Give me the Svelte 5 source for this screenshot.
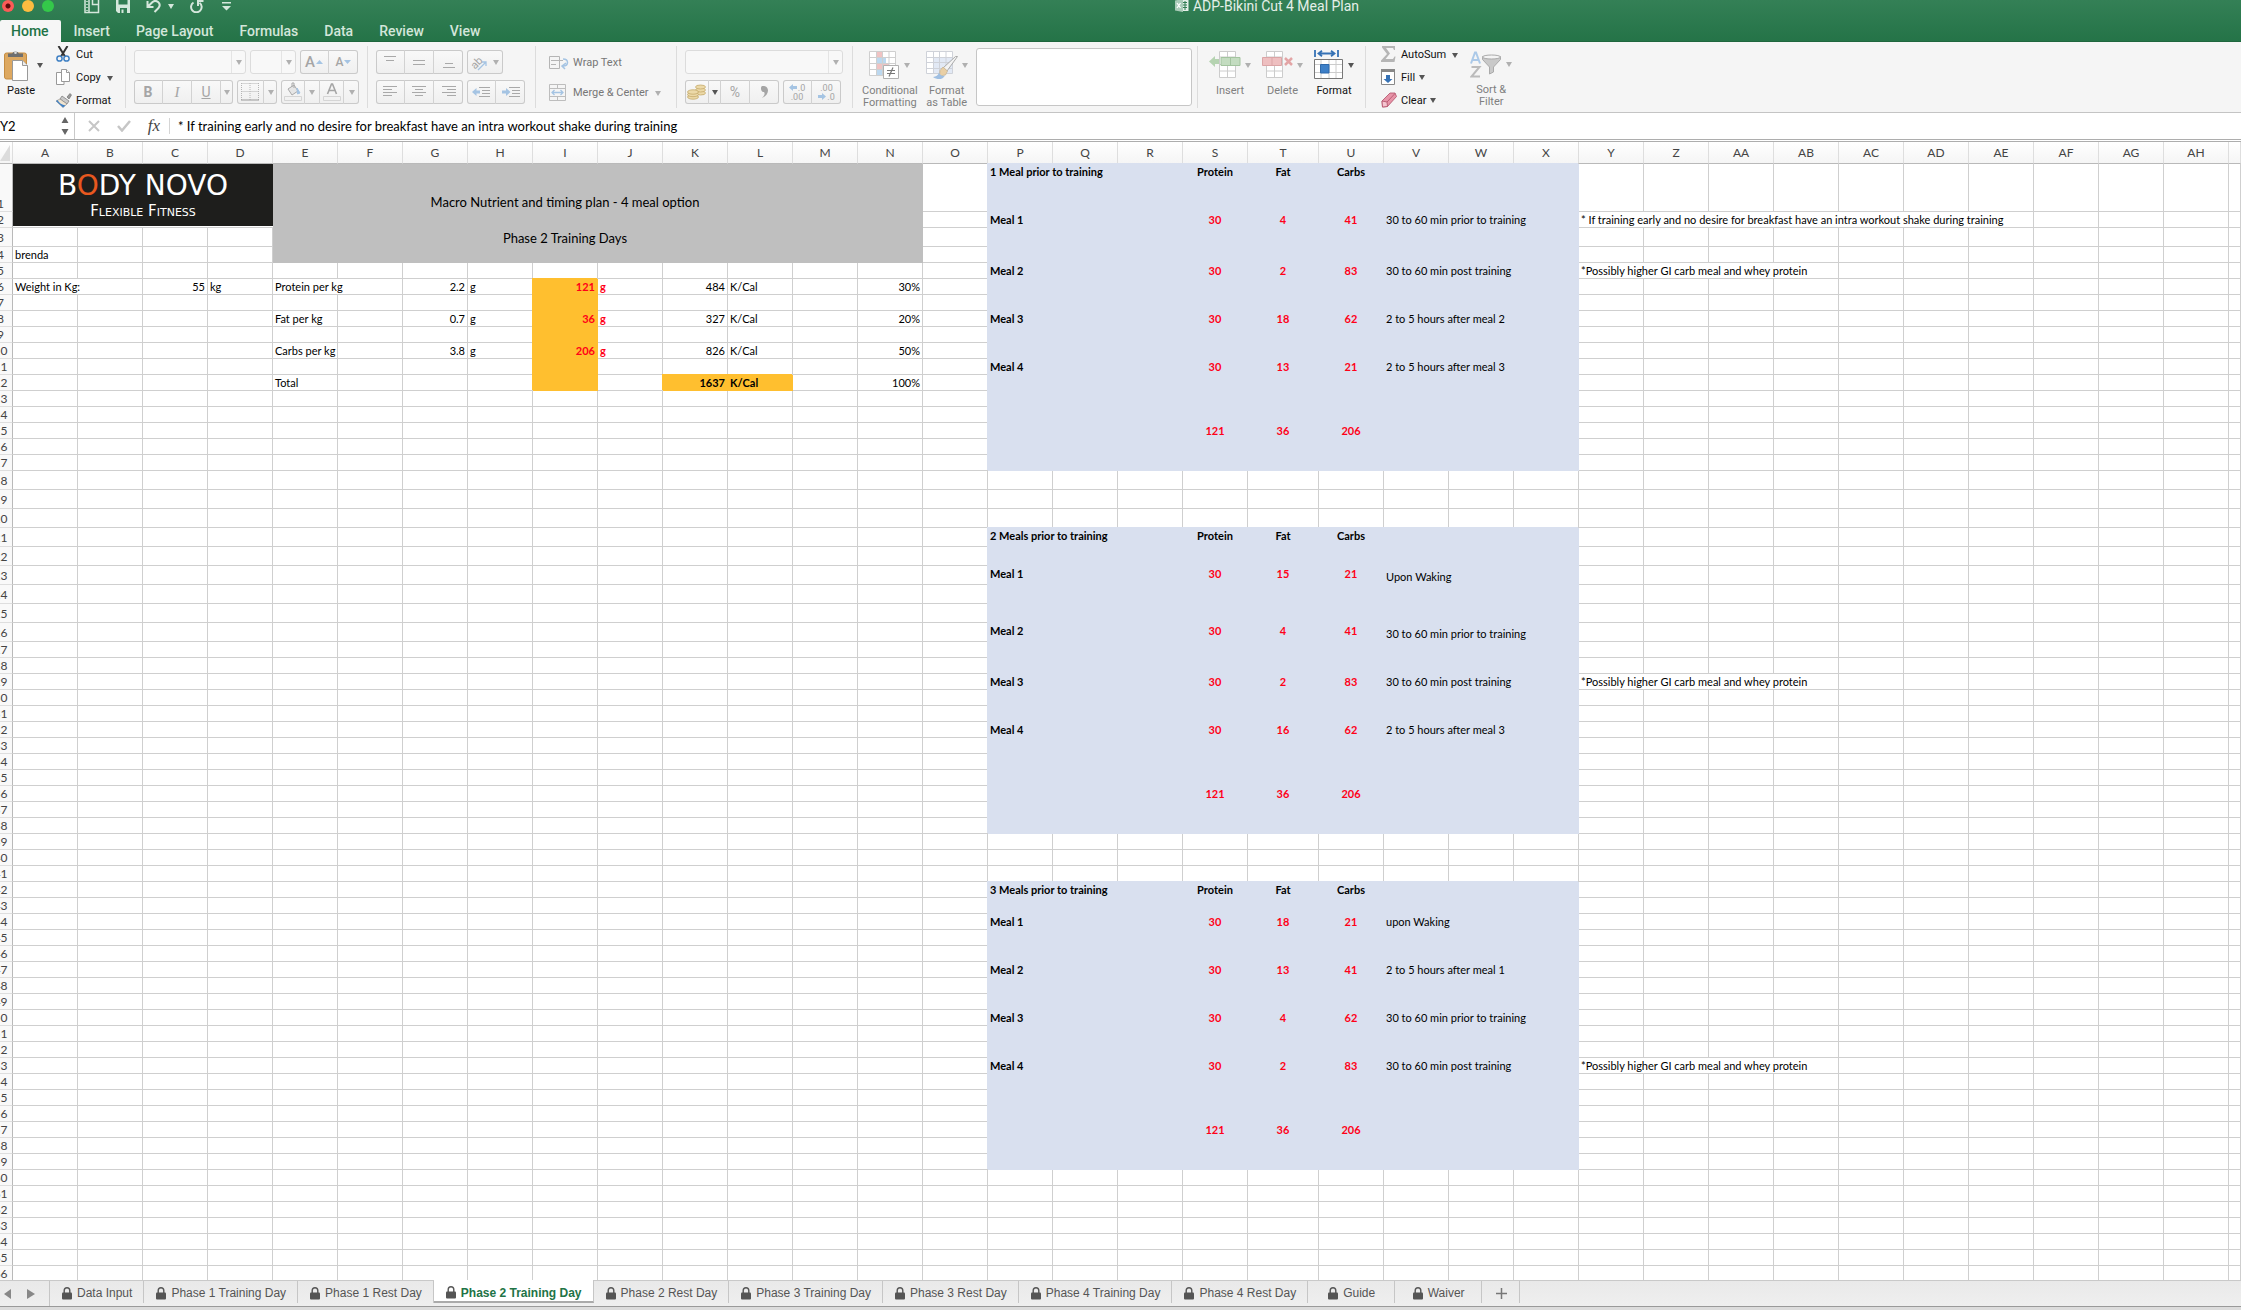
<script lang="ts">
	interface Cell {
		text: string;
		cls?: string;
		span?: number;
	}

	interface Meal {
		row: number;
		name: string;
		values: number[];
		note: string;
	}

	interface Block {
		first: number;
		last: number;
		title: string;
		totalRow: number;
		meals: Meal[];
	}

	const columnName = (i: number): string =>
		i < 26 ? String.fromCharCode(65 + i) : 'A' + String.fromCharCode(39 + i);

	const columns = Array.from({ length: 34 }, (_, i) => columnName(i));
	const rows = Array.from({ length: 66 }, (_, i) => i + 1);

	const menuTabs = ['Home', 'Insert', 'Page Layout', 'Formulas', 'Data', 'Review', 'View'];
	let activeMenu = $state('Home');

	const sheets = [
		'Data Input',
		'Phase 1 Training Day',
		'Phase 1 Rest Day',
		'Phase 2 Training Day',
		'Phase 2 Rest Day',
		'Phase 3 Training Day',
		'Phase 3 Rest Day',
		'Phase 4 Training Day',
		'Phase 4 Rest Day',
		'Guide',
		'Waiver'
	];
	let activeSheet = $state('Phase 2 Training Day');

	let cellRef = $state('Y2');
	let formula = $state(
		'* If training early and no desire for breakfast have an intra workout shake during training'
	);

	const blocks: Block[] = [
		{
			first: 1,
			last: 17,
			title: '1 Meal prior to training',
			totalRow: 15,
			meals: [
				{ row: 2, name: 'Meal 1', values: [30, 4, 41], note: '30 to 60 min prior to training' },
				{ row: 5, name: 'Meal 2', values: [30, 2, 83], note: '30 to 60 min post training' },
				{ row: 8, name: 'Meal 3', values: [30, 18, 62], note: '2 to 5 hours after meal 2' },
				{ row: 11, name: 'Meal 4', values: [30, 13, 21], note: '2 to 5 hours after meal 3' }
			]
		},
		{
			first: 21,
			last: 38,
			title: '2 Meals prior to training',
			totalRow: 36,
			meals: [
				{ row: 23, name: 'Meal 1', values: [30, 15, 21], note: 'Upon Waking' },
				{ row: 26, name: 'Meal 2', values: [30, 4, 41], note: '30 to 60 min prior to training' },
				{ row: 29, name: 'Meal 3', values: [30, 2, 83], note: '30 to 60 min post training' },
				{ row: 32, name: 'Meal 4', values: [30, 16, 62], note: '2 to 5 hours after meal 3' }
			]
		},
		{
			first: 42,
			last: 59,
			title: '3 Meals prior to training',
			totalRow: 57,
			meals: [
				{ row: 44, name: 'Meal 1', values: [30, 18, 21], note: 'upon Waking' },
				{ row: 47, name: 'Meal 2', values: [30, 13, 41], note: '2 to 5 hours after meal 1' },
				{ row: 50, name: 'Meal 3', values: [30, 4, 62], note: '30 to 60 min prior to training' },
				{ row: 53, name: 'Meal 4', values: [30, 2, 83], note: '30 to 60 min post training' }
			]
		}
	];

	const totals = [121, 36, 206];

	const cells: Record<string, Cell> = {
		E1: { text: 'Macro Nutrient and timing plan - 4 meal option', cls: 'banner', span: 9 },
		E3: { text: 'Phase 2 Training Days', cls: 'banner', span: 9 },
		A4: { text: 'brenda' },
		A6: { text: 'Weight in Kg:', span: 2 },
		C6: { text: '55', cls: 'num' },
		D6: { text: 'kg' },
		E6: { text: 'Protein per kg', span: 2 },
		E8: { text: 'Fat per kg' },
		E10: { text: 'Carbs per kg' },
		E12: { text: 'Total' },
		Y2: { text: '* If training early and no desire for breakfast have an intra workout shake during training', span: 7 },
		Y5: { text: '*Possibly higher GI carb meal and whey protein', span: 4 },
		Y29: { text: '*Possibly higher GI carb meal and whey protein', span: 4 },
		Y53: { text: '*Possibly higher GI carb meal and whey protein', span: 4 }
	};

	const macros = [
		{ row: 6, perKg: '2.2', grams: '121', kcal: '484', share: '30%' },
		{ row: 8, perKg: '0.7', grams: '36', kcal: '327', share: '20%' },
		{ row: 10, perKg: '3.8', grams: '206', kcal: '826', share: '50%' }
	];

	for (let r = 1; r <= 4; r++) {
		cells['E' + r] ??= { text: '', cls: 'banner', span: 9 };
		cells['N' + r] = { text: '', cls: 'banner' };
	}

	for (let r = 6; r <= 12; r++) cells['I' + r] = { text: '', cls: 'amber' };

	for (const m of macros) {
		cells['G' + m.row] = { text: m.perKg, cls: 'num' };
		cells['H' + m.row] = { text: 'g' };
		cells['I' + m.row] = { text: m.grams, cls: 'num amber red' };
		cells['J' + m.row] = { text: 'g', cls: 'red' };
		cells['K' + m.row] = { text: m.kcal, cls: 'num' };
		cells['L' + m.row] = { text: 'K/Cal' };
		cells['N' + m.row] = { text: m.share, cls: 'num' };
	}
	cells.K12 = { text: '1637', cls: 'num amber bold' };
	cells.L12 = { text: 'K/Cal', cls: 'amber bold' };
	cells.N12 = { text: '100%', cls: 'num' };

	for (const b of blocks) {
		for (let r = b.first; r <= b.last; r++) {
			cells['P' + r] = { text: '', cls: 'blue', span: 3 };
			for (const c of 'STU') cells[c + r] = { text: '', cls: 'blue' };
			cells['V' + r] = { text: '', cls: 'blue', span: 3 };
		}
		cells['P' + b.first] = { text: b.title, cls: 'blue bold', span: 3 };
		['Protein', 'Fat', 'Carbs'].forEach((t, i) => {
			cells['STU'[i] + b.first] = { text: t, cls: 'blue bold mid' };
		});
		for (const m of b.meals) {
			cells['P' + m.row] = { text: m.name, cls: 'blue bold', span: 3 };
			m.values.forEach((v, i) => {
				cells['STU'[i] + m.row] = { text: String(v), cls: 'blue red mid' };
			});
			cells['V' + m.row] = { text: m.note, cls: 'blue note', span: 3 };
		}
		totals.forEach((v, i) => {
			cells['STU'[i] + b.totalRow] = { text: String(v), cls: 'blue red mid' };
		});
	}

	const rowCells = (row: number): Cell[] => {
		const out: Cell[] = [];
		// A1:D2 is taken up by the logo
		let i = row <= 2 ? 4 : 0;
		while (i < columns.length) {
			const cell = cells[columns[i] + row] ?? { text: '' };
			out.push(cell);
			i += cell.span ?? 1;
		}
		return out;
	};

	const rowClass = (row: number): string => {
		if (row === 1) return 'tall';
		if (row === 3 || (row >= 18 && row <= 26)) return 'medium';
		return '';
	};
</script>

{#snippet caret(dark = false)}
	<i class="caret" class:dark></i>
{/snippet}

{#snippet lines(widths: number[], top = 4, gap = 4, center = false)}
	<svg width="16" height="18" viewBox="0 0 16 18" stroke="#a9a9a9" fill="none">
		{#each widths as w, i}
			<path d="M{center ? 8 - w / 2 : 1} {top + i * gap + 0.5}h{w}" />
		{/each}
	</svg>
{/snippet}

{#snippet lock()}
	<svg width="10" height="13" viewBox="0 0 10 13">
		<path d="M2.2 6V3.6a2.8 2.8 0 0 1 5.6 0V6" fill="none" stroke="#555" stroke-width="1.4" />
		<rect y="5.5" width="10" height="7" rx="1" fill="#555" />
	</svg>
{/snippet}

<div class="window">
	<header>
		<div class="titlebar">
			<div class="quick">
				<div class="lights">
					<button class="light close" aria-label="Close"></button>
					<button class="light minimize" aria-label="Minimize"></button>
					<button class="light zoom" aria-label="Zoom"></button>
				</div>
				<button aria-label="New from template">
					<svg width="16" height="16" viewBox="0 0 16 16" fill="none" stroke="#d5e7dc" stroke-width="1.5">
						<path d="M1 1h13.500v13.500H1zM5 1v13.500M8.500 1v5.500h6" />
						<path d="M3 3v10" stroke-dasharray="1 2" />
					</svg>
				</button>
				<button aria-label="Save">
					<svg width="14" height="14" viewBox="0 0 14 14">
						<path d="M0 0h14v14H2l-2-2z" fill="#d5e7dc" />
						<path d="M2.500 0h9v5.500h-9zM4 9h7v5H4z" fill="#317c53" />
						<path d="M5.500 10.500h2V14h-2z" fill="#d5e7dc" />
					</svg>
				</button>
				<button class="undo" aria-label="Undo">
					<svg width="16" height="14" viewBox="0 0 16 14" fill="none" stroke="#d5e7dc" stroke-width="2">
						<path d="M1.500 2v6h6M2 7.500 6 3.500c4-4 10 1 6.500 5.500L8.500 13" />
					</svg>
					<i class="caret pale"></i>
				</button>
				<button aria-label="Redo">
					<svg width="14" height="14" viewBox="0 0 14 14" fill="none" stroke="#d5e7dc" stroke-width="2">
						<path d="M3.500 3.500a5.300 5.300 0 1 0 6 .2M8 7V2h5.500" />
					</svg>
				</button>
				<button class="customize" aria-label="Customize toolbar">
					<svg width="9" height="9" viewBox="0 0 9 9" fill="#d5e7dc">
						<path d="M0 0h9v1.500H0zM0 4h9L4.500 8.500z" />
					</svg>
				</button>
			</div>
			<h1>
				<svg width="14" height="14" viewBox="0 0 14 14">
					<path d="M5 1h8.500v11H5z" fill="#e4efe8" />
					<path d="M7 3.500h5M7 6h5M7 8.500h5M10 2v9" stroke="#317c53" />
					<path d="M0 1.500 8 0v13l-8-1.500z" fill="#a9cbb8" />
					<path d="m2 4 3.500 5M5.500 4 2 9" stroke="#fff" stroke-width="1.300" />
				</svg>
				ADP-Bikini Cut 4 Meal Plan
			</h1>
		</div>
		<nav class="menu">
			{#each menuTabs as tab}
				<button class:active={tab === activeMenu} onclick={() => (activeMenu = tab)}>{tab}</button>
			{/each}
		</nav>
	</header>

	<div class="ribbon">
		<section class="group clipboard">
			<button class="big paste">
				<span class="pic">
					<svg width="26" height="32" viewBox="0 0 26 32">
						<rect x="0.500" y="4" width="22" height="26" rx="2" fill="#dda860" stroke="#c58d42" />
						<path d="M4 8V4.500h4a4 4 0 0 1 7 0h4V8z" fill="#6f6f6f" />
						<circle cx="11.500" cy="3.800" r="1.300" fill="#ddd" />
						<path d="M8.500 11.500h10l5 5v15h-15z" fill="#fff" stroke="#999" />
						<path d="M18.500 11.500v5h5" fill="#eee" stroke="#999" />
					</svg>
					{@render caret(true)}
				</span>
				<span>Paste</span>
			</button>
			<div class="stack">
				<button>
					<svg width="16" height="16" viewBox="0 0 16 16" fill="none">
						<path d="M2.500 0 9 10.500M11.500 0 5 10.500" stroke="#333" stroke-width="2" />
						<circle cx="3.500" cy="12.500" r="2.600" stroke="#3f80c4" stroke-width="1.500" />
						<circle cx="10.500" cy="12.500" r="2.600" stroke="#3f80c4" stroke-width="1.500" />
					</svg>
					Cut
				</button>
				<button>
					<svg width="16" height="16" viewBox="0 0 16 16" fill="#fff" stroke="#999">
						<path d="M.500 3.500h5l2.500 2.500v9.500H.500z" />
						<path d="M5.500.500h5l3 3v9h-8z" />
						<path d="M10.500.500v3h3" />
					</svg>
					Copy <span class="gap-caret">{@render caret(true)}</span>
				</button>
				<button>
					<svg width="16" height="15" viewBox="0 0 16 15">
						<path d="m11 4 3-3.500 1.500 1.500L13 6z" fill="#999" stroke="#666" stroke-width=".6" />
						<path d="m6 3 7 5-2 3-7-5z" fill="#c9c9c9" stroke="#777" stroke-width=".7" />
						<path d="m4 6 7 5-4 3.500-7-6.500z" fill="#efe3cf" stroke="#777" stroke-width=".5" />
						<path d="m0 8 7 6.500 2.500-2C6 12 3 10 1.500 7z" fill="#3f80c4" />
					</svg>
					Format
				</button>
			</div>
		</section>

		<section class="group rows fonts">
			<div class="line">
				<span class="combo font"><select aria-label="Font"><option></option></select>{@render caret()}</span>
				<span class="combo size"><select aria-label="Font size"><option></option></select>{@render caret()}</span>
				<div class="seg">
					<button aria-label="Increase font size">
						<span class="letter large">A</span>
						<svg width="7" height="6" viewBox="0 0 7 6"><path d="M3.500 1 7 5H0z" fill="#a5c4e3" /></svg>
					</button>
					<button aria-label="Decrease font size">
						<span class="letter">A</span>
						<svg width="7" height="6" viewBox="0 0 7 6"><path d="M3.500 5 7 1H0z" fill="#a5c4e3" /></svg>
					</button>
				</div>
			</div>
			<div class="line">
				<div class="seg">
					<button aria-label="Bold"><b>B</b></button>
					<button aria-label="Italic"><em>I</em></button>
					<button aria-label="Underline"><u>U</u></button>
					<button class="drop" aria-label="Underline style">{@render caret()}</button>
				</div>
				<div class="seg">
					<button class="narrow" aria-label="Borders">
						<svg width="18" height="18" viewBox="0 0 18 18" stroke="#b5b5b5" fill="none">
							<path d="M.500.500h17M.500 8.500h17M.500 0v17M9 0v17M17.500 0v17" stroke-dasharray="1 1" />
							<path d="M0 17h18" stroke="#999" />
						</svg>
					</button>
					<button class="drop narrow-drop" aria-label="Border style">{@render caret()}</button>
				</div>
				<div class="seg">
					<button class="plain" aria-label="Fill color">
						<svg width="18" height="20" viewBox="0 0 18 20" fill="none" stroke="#a9a9a9">
							<path d="m4 7 6-4 4 6-6 4z" fill="#e6e6e6" />
							<path d="M8 5V1h2v5" />
							<path d="m13 6 3 5-2.500 1z" fill="#a5c4e3" stroke="#a5c4e3" />
							<path d="M.500 14.500h17v4H.500z" stroke="#d5d5d5" />
						</svg>
					</button>
					<button class="drop half" aria-label="Fill options">{@render caret()}</button>
					<button class="plain" aria-label="Font color">
						<svg width="18" height="20" viewBox="0 0 18 20" fill="none">
							<path d="M4.500 12 8.500 2h1l4 10M6 8.500h6" stroke="#a5a5a5" stroke-width="1.600" />
							<path d="M.500 14.500h17v4H.500z" stroke="#d5d5d5" />
						</svg>
					</button>
					<button class="drop half" aria-label="Font color options">{@render caret()}</button>
				</div>
			</div>
		</section>

		<section class="group rows align">
			<div class="line">
				<div class="seg">
					<button aria-label="Align top">{@render lines([12, 8], 3, 4, true)}</button>
					<button aria-label="Align middle">{@render lines([12, 12], 7, 4, true)}</button>
					<button aria-label="Align bottom">{@render lines([8, 12], 10, 4, true)}</button>
				</div>
				<div class="seg">
					<button class="orient" aria-label="Orientation">
						<svg width="18" height="18" viewBox="0 0 18 18">
							<text x="-1" y="13" transform="rotate(-45 6 9)" font-size="11" fill="#a5a5a5">ab</text>
							<path d="m7 17 8-8m0 4V9h-4" fill="none" stroke="#a5c4e3" stroke-width="1.300" />
						</svg>
						{@render caret()}
					</button>
				</div>
			</div>
			<div class="line">
				<div class="seg">
					<button aria-label="Align left">{@render lines([14, 9, 14, 9], 3, 3)}</button>
					<button aria-label="Align center">{@render lines([14, 8, 14, 8], 3, 3, true)}</button>
					<button aria-label="Align right">
						<svg width="16" height="18" viewBox="0 0 16 18" stroke="#a9a9a9">
							<path d="M1 3.500h14M6 6.500h9M1 9.500h14M6 12.500h9" />
						</svg>
					</button>
				</div>
				<div class="seg">
					<button aria-label="Decrease indent">
						<svg width="18" height="14" viewBox="0 0 18 14">
							<path d="M7 2.500h11M10 5.500h8M10 8.500h8M7 11.500h11" stroke="#a9a9a9" />
							<path d="m0 7 4.500-4v2.500H8v3H4.500V11z" fill="#a5c4e3" />
						</svg>
					</button>
					<button aria-label="Increase indent">
						<svg width="18" height="14" viewBox="0 0 18 14">
							<path d="M7 2.500h11M10 5.500h8M10 8.500h8M7 11.500h11" stroke="#a9a9a9" />
							<path d="M8.500 7 4 3v2.500H0v3h4V11z" fill="#a5c4e3" />
						</svg>
					</button>
				</div>
			</div>
		</section>

		<section class="group rows wrap">
			<button class="line">
				<svg width="20" height="15" viewBox="0 0 20 15" fill="none" stroke="#b5b5b5">
					<path d="M.500 1.500h10v12H.500zM2 5.500h12M2 9.500h5" />
					<path d="M14 4c6 0 6 7 0 7m3-3-4 3 3 3" stroke="#a5c4e3" stroke-width="1.500" />
				</svg>
				Wrap Text
			</button>
			<button class="line">
				<svg width="20" height="17" viewBox="0 0 20 17" fill="none" stroke="#bdbdbd">
					<path d="M.500.500h16v16H.500zM.500 4.500h16M.500 12.500h16M8.500.500v4M8.500 12.500v4" />
					<path d="M3 8.500h11M5.500 6 3 8.500 5.500 11M11.500 6 14 8.500 11.500 11" stroke="#a5c4e3" stroke-width="1.300" />
				</svg>
				Merge &amp; Center <span class="gap-caret">{@render caret()}</span>
			</button>
		</section>

		<section class="group rows numbers">
			<div class="line">
				<span class="combo number"><select aria-label="Number format"><option></option></select>{@render caret()}</span>
			</div>
			<div class="line">
				<div class="seg">
					<button class="plain" aria-label="Currency">
						<svg width="20" height="16" viewBox="0 0 20 16" fill="#ecd9a8" stroke="#c4a96b" stroke-width=".8">
							<ellipse cx="13.500" cy="9" rx="5" ry="2" />
							<ellipse cx="13.500" cy="6" rx="5" ry="2" />
							<ellipse cx="13.500" cy="3" rx="5" ry="2" />
							<ellipse cx="6" cy="13" rx="5.500" ry="2.200" />
							<ellipse cx="6" cy="10.500" rx="5.500" ry="2.200" />
							<ellipse cx="6" cy="8" rx="5.500" ry="2.200" />
						</svg>
					</button>
					<button class="drop" aria-label="Currency options">{@render caret(true)}</button>
					<button aria-label="Percent">%</button>
					<button aria-label="Comma style">
						<svg width="8" height="12" viewBox="0 0 8 12"><path d="M1 0c8-1 8 9 0 12 3-3 3-5 2-6C0 7-1 1 1 0z" fill="#a5a5a5" /></svg>
					</button>
				</div>
				<div class="seg">
					<button class="decimals" aria-label="Increase decimal">
						<span><svg width="8" height="7" viewBox="0 0 8 7"><path d="m0 3.500 4-3.500v2h4v3H4v2z" fill="#a5c4e3" /></svg>.0</span>
						<span>.00</span>
					</button>
					<button class="decimals" aria-label="Decrease decimal">
						<span>.00</span>
						<span><svg width="8" height="7" viewBox="0 0 8 7"><path d="M8 3.500 4 0v2H0v3h4v2z" fill="#a5c4e3" /></svg>.0</span>
					</button>
				</div>
			</div>
		</section>

		<section class="group styles">
			<button class="big faded">
				<span class="pic">
					<svg width="31" height="30" viewBox="0 0 31 30">
						<path d="M.500 1.500h26v24H.500z" fill="#fff" />
						<path d="M7 1.500h6v6H7zM7 13.500h13v6H7z" fill="#f0c3c3" />
						<path d="M7 7.500h10v6H7zM7 19.500h6v6H7z" fill="#bcd8ef" />
						<path d="M.500 1.500h26v24H.500zM.500 7.500h26M.500 13.500h26M.500 19.500h26M7.500 1.500v24M13.500 1.500v24M20 1.500v24" fill="none" stroke="#cfcfcf" />
						<path d="M14.500 15.500h15v13h-15z" fill="#fff" stroke="#b0b0b0" />
						<path d="M18 20.500h8M18 23.500h8M24 17.500l-4 9" stroke="#777" stroke-width="1.200" />
					</svg>
					{@render caret()}
				</span>
				<span>Conditional</span>
				<span>Formatting</span>
			</button>
			<button class="big faded">
				<span class="pic">
					<svg width="32" height="30" viewBox="0 0 32 30">
						<path d="M.500 1.500h26v22H.500z" fill="#fff" />
						<path d="M7 7.500h20v16H7z" fill="#e2e9f5" />
						<path d="M.500 1.500h26v22H.500zM.500 7.500h26M.500 12.500h26M.500 18.500h26M7.500 1.500v22M13.500 1.500v22M20 1.500v22" fill="none" stroke="#cfd2d9" />
						<path d="M31.500 6.500 21 21l-4-3L29.500 6.500z" fill="#f3f3f3" stroke="#aaa" />
						<path d="m17 17 4.500 4-2 4-6 1 .500-5.500z" fill="#e9cfa5" stroke="#c4b28f" stroke-width=".7" />
						<path d="M13 22.500c-1 3-3 4-6 4.500 4 3 10 3 12-1.500-2 1-5 0-6-3z" fill="#9fbfe2" />
					</svg>
					{@render caret()}
				</span>
				<span>Format</span>
				<span>as Table</span>
			</button>
			<div class="gallery"></div>
		</section>

		<section class="group cells">
			<button class="big faded">
				<span class="pic">
					<svg width="32" height="28" viewBox="0 0 32 28">
						<path d="M10.500.500h16v26h-16zM10.500 6h16M10.500 13.500h16M10.500 20h16M18.500.500v26" fill="#fff" stroke="#ccc" />
						<path d="M12 6.500h19v8H12z" fill="#c3dcc0" stroke="#a3c49f" />
						<path d="M21.500 6.500v8" stroke="#a3c49f" />
						<path d="m0 10.500 6-5.500v3h4v5H6v3z" fill="#b5d3b1" />
					</svg>
					{@render caret()}
				</span>
				<span>Insert</span>
			</button>
			<button class="big faded">
				<span class="pic">
					<svg width="31" height="28" viewBox="0 0 31 28">
						<path d="M4.500.500h16v26h-16zM4.500 6h16M4.500 13.500h16M4.500 20h16M12.500.500v26" fill="#fff" stroke="#ccc" />
						<path d="M.500 6.500h19v8H.500z" fill="#eebfc0" stroke="#dba5a6" />
						<path d="M10 6.500v8" stroke="#dba5a6" />
						<path d="m23 7 7 7m0-7-7 7" stroke="#e3a5a6" stroke-width="2.500" />
					</svg>
					{@render caret()}
				</span>
				<span>Delete</span>
			</button>
			<button class="big">
				<span class="pic">
					<svg width="30" height="30" viewBox="0 0 30 30">
						<path d="M.500 9.500h28v19H.500z" fill="#fff" />
						<path d="M1 14.500h27M1 22.500h27M7 10v18M15 10v18M22 10v18" stroke="#ccc" />
						<path d="M.500 9.500h28v19H.500z" fill="none" stroke="#777" />
						<path d="M6.500 14.500h8.500v8.500H6.500z" fill="#3d7fc7" stroke="#2f69aa" />
						<path d="M1 0v7M24 0v7M5 3.500h15M8 .800 4.500 3.500 8 6.200M17 .800l3.500 2.700L17 6.200" fill="none" stroke="#3672b5" stroke-width="1.800" />
					</svg>
					{@render caret(true)}
				</span>
				<span>Format</span>
			</button>
		</section>

		<section class="group editing">
			<div class="stack">
				<button>
					<svg width="16" height="16" viewBox="0 0 16 16"><path d="M1 0h13v4h-1l-1-2H5l4 5.500L4.500 13H12l1.500-2.500h1L13.500 16H0v-1.500L6 8 1 1.500z" fill="#b5b5b5" /></svg>
					AutoSum <span class="gap-caret">{@render caret(true)}</span>
				</button>
				<button>
					<svg width="16" height="16" viewBox="0 0 16 16">
						<path d="M.500.500h13v15H.500z" fill="#fff" stroke="#888" />
						<path d="M0 0h14v3H0z" fill="#888" />
						<path d="M5 6h4v4h2.500L7 14 2.500 10H5z" fill="#3672b5" />
					</svg>
					Fill {@render caret(true)}
				</button>
				<button>
					<svg width="16" height="16" viewBox="0 0 16 16" stroke="#b04f67" stroke-width=".8">
						<path d="m1 9 8-8h5l1.500 3.500-9 10-5 .500z" fill="#e794a8" />
						<path d="m1 9 5 1 .500 4.500-5 .500z" fill="#f5c5d0" />
						<path d="M6 10 14 1.500" fill="none" />
					</svg>
					Clear {@render caret(true)}
				</button>
			</div>
			<button class="big faded sort">
				<span class="pic">
					<svg width="32" height="28" viewBox="0 0 32 28" fill="none">
						<path d="m1 12.500 4-11h1l4 11M2.500 9h6" stroke="#abc9e8" stroke-width="2" />
						<path d="M1.500 16h8l-8 9.500h8.500" stroke="#bbb" stroke-width="2" />
						<path d="M12.500 5.500v3l7 7.500v7l4-2V16l7-7.500v-3z" fill="#c9c9c9" stroke="#aaa" />
						<ellipse cx="21.500" cy="6" rx="9" ry="2" fill="#f4f4f4" stroke="#aaa" />
					</svg>
					{@render caret()}
				</span>
				<span>Sort &amp;</span>
				<span>Filter</span>
			</button>
		</section>
	</div>

	<div class="formula-bar">
		<div class="name-box">
			<input aria-label="Name box" bind:value={cellRef} />
			<svg width="8" height="18" viewBox="0 0 8 18" fill="#666"><path d="M4 0 7.500 6h-7zM4 18 .500 12h7z" /></svg>
		</div>
		<button aria-label="Cancel">
			<svg width="12" height="12" viewBox="0 0 12 12"><path d="m1 1 10 10M11 1 1 11" stroke="#c6c6c6" stroke-width="2" /></svg>
		</button>
		<button aria-label="Enter">
			<svg width="14" height="12" viewBox="0 0 14 12" fill="none"><path d="m1 6 4 4.500L13 1" stroke="#c6c6c6" stroke-width="2.500" /></svg>
		</button>
		<button class="fx" aria-label="Insert function">fx</button>
		<input class="formula" aria-label="Formula" bind:value={formula} />
	</div>

	<main class="sheet">
		<table>
			<colgroup>
				<col class="row-col" />
				{#each columns as name}
					<col class={name === 'T' ? 'wide-col' : 'std-col'} />
				{/each}
				<col />
			</colgroup>
			<thead>
				<tr>
					<th class="corner"><svg width="10" height="16" viewBox="0 0 10 16"><path d="M10 0v16H0z" fill="#dcdcdc" /></svg></th>
					{#each columns as name}
						<th scope="col">{name}</th>
					{/each}
					<th></th>
				</tr>
			</thead>
			<tbody>
				{#each rows as row}
					<tr class={rowClass(row)}>
						<th scope="row">{row}</th>
						{#if row === 1}
							<td class="logo-cell" colspan="4" rowspan="2">
								<div class="logo">
									<strong>B<span>O</span>DY NOVO</strong>
									<small>Flexible Fitness</small>
								</div>
							</td>
						{/if}
						{#each rowCells(row) as cell}
							<td class={cell.cls} colspan={cell.span ?? 1}>{cell.text}</td>
						{/each}
						<td></td>
					</tr>
				{/each}
			</tbody>
		</table>
	</main>

	<footer>
		<div class="scrollers">
			<button aria-label="Previous sheet"><svg width="7" height="10" viewBox="0 0 7 10"><path d="M7 0v10L0 5z" fill="#888" /></svg></button>
			<button aria-label="Next sheet"><svg width="8" height="10" viewBox="0 0 8 10"><path d="M0 0v10l8-5z" fill="#888" /></svg></button>
		</div>
		{#each sheets as sheet}
			<button class="tab" class:active={sheet === activeSheet} onclick={() => (activeSheet = sheet)}>
				{@render lock()}
				{sheet}
			</button>
		{/each}
		<button class="tab add" aria-label="Add sheet">
			<svg width="11" height="11" viewBox="0 0 11 11"><path d="M5.500 0v11M0 5.500h11" stroke="#777" stroke-width="1.500" /></svg>
		</button>
	</footer>
</div>

<style>
	:global(body) {
		margin: 0;
		overflow: hidden;
	}

	.window {
		height: 100vh;
		display: flex;
		flex-direction: column;
		font-family: Roboto, 'Liberation Sans', sans-serif;
		font-size: 11px;
		color: #111;
		background: #fff;
	}

	button {
		border: 0;
		padding: 0;
		margin: 0;
		background: none;
		font: inherit;
		color: inherit;
		white-space: nowrap;
	}

	svg {
		display: block;
		flex: none;
	}

	header {
		background: linear-gradient(#348056, #247347);
		height: 42px;
		flex: none;
		display: flex;
		flex-direction: column;
		justify-content: space-between;
		box-shadow: inset 0 -1px 0 #1f663e;
	}

	.titlebar {
		display: flex;
		height: 12px;
	}

	.quick {
		width: 293px;
		flex: none;
		display: flex;
		align-items: center;
		gap: 16px;
	}

	.lights {
		display: flex;
		gap: 8px;
		padding: 0 14px 0 2px;
	}

	.light {
		width: 12px;
		height: 12px;
		border-radius: 50%;
	}

	.close {
		background: radial-gradient(#5e0b0b 2px, #fc5b57 3px);
	}

	.minimize {
		background: #fdbc40;
	}

	.zoom {
		background: #34c84a;
	}

	.undo {
		display: flex;
		align-items: center;
		gap: 6px;
	}

	.customize {
		padding-left: 2px;
	}

	h1 {
		flex: 1;
		margin: 0;
		display: flex;
		align-items: center;
		justify-content: center;
		gap: 4px;
		font-size: 14px;
		font-weight: 400;
		color: #e4efe8;
	}

	.menu {
		display: flex;
		height: 22px;
	}

	.menu button {
		padding: 0 13px;
		font-size: 14px;
		font-weight: 500;
		color: #d3e6da;
	}

	.menu .active {
		background: #f6f6f6;
		color: #217346;
		padding: 0 12px 0 11px;
		border-radius: 2px 2px 0 0;
	}

	.caret {
		display: inline-block;
		border: 3px solid transparent;
		border-top: 5px solid #b0b0b0;
		border-bottom: 0;
	}

	.caret.dark {
		border-top-color: #555;
	}

	.caret.pale {
		border-top-color: #d5e7dc;
	}

	.ribbon {
		display: flex;
		height: 62px;
		flex: none;
		padding: 4px 0;
		background: #f5f5f5;
		border-bottom: 1px solid #c4c4c4;
	}

	.group {
		display: flex;
		flex: none;
		box-sizing: border-box;
		border-right: 1px solid #dcdcdc;
	}

	.group:last-child {
		border: 0;
	}

	.rows {
		flex-direction: column;
		gap: 6px;
		padding: 4px 0 0 8px;
	}

	.line {
		display: flex;
		align-items: center;
		gap: 4px;
		height: 24px;
	}

	.clipboard {
		width: 126px;
		gap: 13px;
		padding-left: 4px;
	}

	.stack {
		display: flex;
		flex-direction: column;
		justify-content: space-between;
		margin: -2px 0;
	}

	.stack button {
		display: flex;
		align-items: center;
		gap: 4px;
		height: 20px;
	}

	.big {
		display: flex;
		flex-direction: column;
		align-items: center;
		line-height: 12px;
		padding-top: 4px;
	}

	.pic {
		display: flex;
		align-items: center;
		justify-content: center;
		gap: 4px;
		height: 30px;
		margin-bottom: 5px;
	}

	.paste .pic {
		gap: 7px;
	}

	.paste {
		align-items: flex-start;
	}

	.paste > span:last-child {
		padding-left: 3px;
	}

	.faded {
		color: #808080;
	}

	.combo {
		position: relative;
		display: flex;
	}

	.combo select {
		appearance: none;
		width: 100%;
		height: 24px;
		border: 1px solid #dcdcdc;
		border-radius: 3px;
		background: linear-gradient(90deg, transparent calc(100% - 14px), #e4e4e4 0, #e4e4e4 calc(100% - 13px), transparent 0) #f8f8f8;
	}

	.combo .caret {
		position: absolute;
		right: 4px;
		top: 10px;
	}

	.font {
		width: 112px;
	}

	.size {
		width: 46px;
	}

	.number {
		width: 158px;
	}

	.fonts {
		width: 242px;
	}

	.align {
		width: 168px;
	}

	.numbers {
		width: 176px;
	}

	.seg {
		display: flex;
		height: 24px;
		border-radius: 3px;
		background: linear-gradient(#f9f9f9, #efefef);
		box-shadow: inset 0 0 0 1px #cacaca;
		color: #a5a5a5;
	}

	.seg button {
		width: 29px;
		box-sizing: border-box;
		display: flex;
		align-items: center;
		justify-content: center;
		gap: 1px;
		border-right: 1px solid #d2d2d2;
		font-size: 14px;
	}

	.seg button:last-child {
		border-right: 0;
	}

	.seg .drop {
		width: 12px;
	}

	.seg .narrow {
		width: 27px;
	}

	.seg .plain {
		width: 24px;
	}

	.seg .narrow-drop {
		width: 13px;
	}

	.seg .half {
		width: 15px;
	}

	.seg .orient {
		width: 36px;
		gap: 4px;
	}

	.seg em {
		font-family: 'Liberation Serif', serif;
		font-size: 15px;
	}

	.letter {
		font-size: 12px;
		font-weight: 500;
	}

	.letter.large {
		font-size: 15px;
	}

	.seg .decimals {
		flex-direction: column;
		font-size: 9px;
		line-height: 8px;
		gap: 1px;
	}

	.decimals span {
		display: flex;
		gap: 1px;
	}

	.wrap {
		width: 141px;
		padding-left: 13px;
		color: #777;
	}

	.gap-caret {
		padding-left: 2px;
	}

	.styles {
		width: 345px;
		padding-left: 9px;
		gap: 8px;
	}

	.gallery {
		width: 214px;
		margin: 2px 0;
		border: 1px solid #c6c6c6;
		border-radius: 3px;
		background: #fff;
	}

	.cells {
		width: 168px;
		padding-left: 11px;
		gap: 11px;
	}

	.editing {
		padding-left: 15px;
		gap: 12px;
	}

	.formula-bar {
		display: flex;
		align-items: center;
		flex: none;
		height: 26px;
		border-bottom: 3px double #adadad;
	}

	.formula-bar input {
		border: 0;
		padding: 0;
		outline: 0;
		background: none;
		color: #000;
		font-family: Lato, sans-serif;
		font-size: 13px;
	}

	.name-box {
		display: flex;
		align-items: center;
		justify-content: space-between;
		box-sizing: border-box;
		width: 75px;
		height: 100%;
		padding-right: 5px;
		border-right: 1px solid #c9c9c9;
	}

	.name-box input {
		width: 50px;
	}

	.formula-bar button {
		width: 30px;
		display: flex;
		justify-content: center;
	}

	.name-box + button {
		margin-left: 4px;
	}

	.formula-bar .fx {
		font: italic 17px 'Liberation Serif', serif;
		color: #444;
	}

	.formula-bar .formula {
		flex: 1;
		border-left: 1px solid #d5d5d5;
		padding-left: 8px;
	}

	.sheet {
		flex: 1;
		min-height: 0;
		overflow: hidden;
		font-family: Lato, sans-serif;
	}

	table {
		width: calc(100% + 11px);
		margin-left: -11px;
		table-layout: fixed;
		border-collapse: separate;
		border-spacing: 0;
	}

	.row-col {
		width: 24px;
	}

	.std-col {
		width: 65px;
	}

	.wide-col {
		width: 71px;
	}

	th {
		box-sizing: border-box;
		padding: 0;
		font-weight: 400;
		font-size: 12px;
		line-height: 15px;
		color: #444;
	}

	thead th {
		height: 22px;
		background: linear-gradient(#fff, #f5f5f5);
		border-right: 1px solid #dedede;
		border-bottom: 1px solid #b9b9b9;
	}

	.corner svg {
		margin: 0 2px 0 auto;
	}

	tbody th {
		background: #f9f9f9;
		border-right: 1px solid #b9b9b9;
		border-bottom: 1px solid #dedede;
	}

	td {
		box-sizing: border-box;
		height: 16px;
		padding: 1px 2px 0;
		border-right: 1px solid #cfcfcf;
		border-bottom: 1px solid #cfcfcf;
		font-size: 11px;
		line-height: 14px;
		white-space: nowrap;
		color: #000;
	}

	.tall td {
		height: 48px;
	}

	.tall th,
	.tall .banner {
		vertical-align: bottom;
	}

	.medium td {
		height: 19px;
	}

	.num {
		text-align: right;
	}

	.mid {
		text-align: center;
	}

	.bold,
	.red {
		font-weight: 700;
	}

	.red {
		color: #ff0018;
	}

	/* the shadow hides the gridlines of the cells above and to the left */
	.blue {
		background: #d9e0ef;
		border-color: #d9e0ef;
		box-shadow: -1px -1px 0 #d9e0ef;
		vertical-align: top;
	}

	.note {
		vertical-align: bottom;
	}

	.amber {
		background: #ffbf2f;
		border-color: #ffbf2f;
		box-shadow: -1px -1px 0 #ffbf2f;
	}

	.banner {
		background: #bfbfbf;
		border-color: #bfbfbf;
		text-align: center;
		font-size: 13px;
	}

	.tall .banner {
		padding-bottom: 2px;
	}

	td.logo-cell {
		padding: 0;
		border-right: 0;
		vertical-align: top;
	}

	.logo {
		height: 62px;
		display: flex;
		flex-direction: column;
		align-items: center;
		justify-content: center;
		background: #1e1e1c;
		color: #fff;
		font-family: 'DejaVu Sans', sans-serif;
	}

	.logo strong {
		font-size: 28px;
		font-weight: 400;
		line-height: 32px;
	}

	.logo strong span {
		color: #e8581f;
	}

	.logo small {
		font-size: 15px;
		line-height: 18px;
		font-variant: small-caps;
	}

	footer {
		display: flex;
		flex: none;
		height: 25px;
		border-top: 1px solid #c9c9c9;
		border-bottom: 1px solid #9a9a9a;
		background: linear-gradient(#e9e9e9, #efefef);
		margin-bottom: 3px;
		box-shadow: 0 3px 0 #dcdcdc;
		font-family: 'Liberation Sans', sans-serif;
		font-size: 12px;
		color: #555;
	}

	.scrollers {
		display: flex;
		align-items: center;
		gap: 16px;
		width: 45px;
		padding-left: 4px;
		border-right: 1px solid #c6c6c6;
	}

	.tab {
		display: flex;
		align-items: center;
		justify-content: center;
		gap: 5px;
		height: 22px;
		min-width: 87px;
		padding: 2px 11px 0 12px;
		border-right: 1px solid #c6c6c6;
	}

	.tab.active {
		height: 23px;
		margin-top: -1px;
		padding-top: 4px;
		background: #fff;
		border-bottom: 2px solid #aaa;
		color: #217346;
		font-weight: 700;
	}

	.tab.add {
		min-width: 38px;
	}
</style>
